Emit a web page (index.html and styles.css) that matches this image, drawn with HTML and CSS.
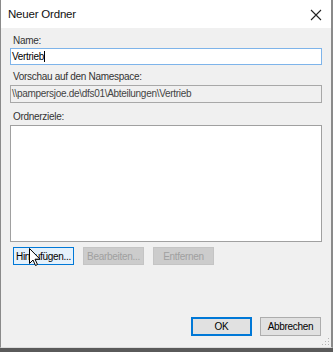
FILE: index.html
```html
<!DOCTYPE html>
<html lang="de">
<head>
  <meta charset="UTF-8">
  <title>Neuer Ordner</title>
  <link rel="stylesheet" href="styles.css">
</head>
<body>
  <div class="dialog">
    <div class="titlebar">
      <span class="title">Neuer Ordner</span>
      <svg class="close" width="12" height="12" viewBox="0 0 12 12">
        <path d="M1 1 L11 11 M11 1 L1 11" stroke="#222" stroke-width="1.1" fill="none"/>
      </svg>
    </div>

    <div class="content">
      <label class="lbl">Name:</label>
      <div class="field focused">Vertrieb<span class="caret"></span></div>

      <label class="lbl">Vorschau auf den Namespace:</label>
      <div class="field readonly">\\pampersjoe.de\dfs01\Abteilungen\Vertrieb</div>

      <label class="lbl">Ordnerziele:</label>
      <div class="listbox"></div>

      <div class="row">
        <button class="btn hover">Hinzufügen...</button>
        <button class="btn disabled">Bearbeiten...</button>
        <button class="btn disabled">Entfernen</button>
      </div>

      <div class="footer">
        <button class="btn default">OK</button>
        <button class="btn">Abbrechen</button>
      </div>
    </div>

    <svg class="grip" width="10" height="10" viewBox="0 0 10 10">
      <g fill="#b4b4b4">
        <rect x="8" y="2" width="1" height="1"/>
        <rect x="5" y="5" width="1" height="1"/>
        <rect x="8" y="5" width="1" height="1"/>
        <rect x="2" y="8" width="1" height="1"/>
        <rect x="5" y="8" width="1" height="1"/>
        <rect x="8" y="8" width="1" height="1"/>
      </g>
    </svg>

    <svg class="cursor" width="12" height="19" viewBox="0 0 12 19">
      <path d="M0.5 0.5 L0.5 15.5 L4 12 L6.5 17.5 L8.5 16.5 L6 11.2 L11 11.2 Z" fill="#fff" stroke="#000" stroke-width="1"/>
    </svg>
  </div>
</body>
</html>
```

FILE: styles.css
```css
html {
  background-color: #5a5a5a;
}
body {
  margin: 0;
  font-family: "Liberation Sans", Arial, sans-serif;
  font-size: 10px;
  letter-spacing: -0.3px;
  color: #000;
}
.dialog {
  position: relative;
  width: 330px;
  height: 347px;
  border-left: 1px solid #8a8a8a;
  border-right: 2px solid #8a8a8a;
  border-bottom: 1px solid #dcdcdc;
  background-color: #f0f0f0;
}
.titlebar {
  height: 28px;
  background-color: #fff;
  display: flex;
  align-items: center;
  justify-content: space-between;
  padding: 0 9px 0 7px;
}
.title {
  font-family: "Liberation Sans", Arial, sans-serif;
  font-size: 11.5px;
  letter-spacing: -0.2px;
  color: #111;
}
.close {
  margin-top: 1px;
}
.content {
  padding: 6px 9px 0 9px;
}
.lbl {
  display: block;
  padding-left: 3px;
  color: #333;
  height: 14px;
  line-height: 14px;
}
.field {
  height: 15px;
  line-height: 15px;
  border: 1px solid #7a7a7a;
  background-color: #fff;
  padding-left: 1px;
  margin-bottom: 5px;
  white-space: nowrap;
}
.field.focused {
  border-color: #7eb4ea;
}
.field.readonly {
  background-color: #f0f0f0;
  border-color: #a8a8a8;
  color: #444;
  height: 16px;
  line-height: 16px;
  margin-top: 1px;
  margin-bottom: 7px;
}
.caret {
  display: inline-block;
  width: 1px;
  height: 11px;
  background-color: #000;
  vertical-align: -2px;
}
.listbox {
  height: 115px;
  border: 1px solid #a0a0a0;
  background-color: #fff;
  margin-top: 1px;
}
.row {
  display: flex;
  gap: 9px;
  margin-top: 5px;
  padding-left: 3px;
}
.btn {
  font-family: "Liberation Sans", Arial, sans-serif;
  font-size: 10px;
  letter-spacing: -0.3px;
  height: 18px;
  width: 61px;
  padding: 0;
  border: 1px solid #adadad;
  background-color: #e1e1e1;
  color: #000;
}
.btn.hover {
  background-color: #e5f1fb;
  border-color: #0078d7;
}
.btn.disabled {
  background-color: #cccccc;
  border-color: #c4c4c4;
  color: #a0a0a0;
}
.footer {
  display: flex;
  justify-content: flex-end;
  gap: 8px;
  margin-top: 52px;
  padding-right: 1px;
}
.footer .btn {
  height: 19px;
}
.btn.default {
  border: 2px solid #0078d7;
}
.grip {
  position: absolute;
  right: 1px;
  bottom: 1px;
}
.cursor {
  position: absolute;
  left: 28px;
  top: 248px;
}
```
